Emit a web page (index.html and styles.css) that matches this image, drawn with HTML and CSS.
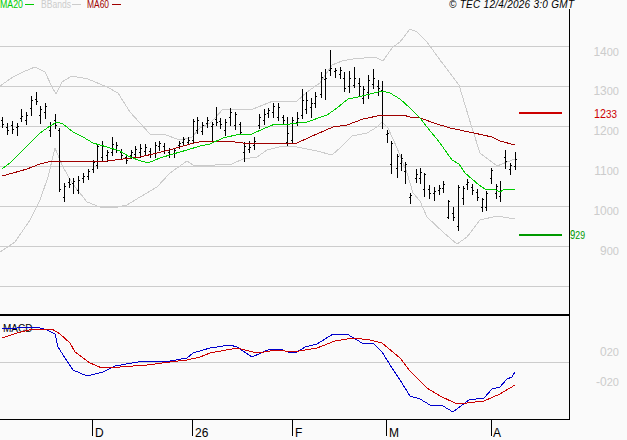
FILE: index.html
```html
<!DOCTYPE html>
<html lang="en">
<head>
    <meta charset="UTF-8">
    <title>Chart</title>
    <link rel="stylesheet" href="styles.css">
</head>
<body>
    <svg class="chart" width="627" height="440" viewBox="0 0 627 440">
        <!-- grid -->
        <path class="grid" d="M0 46.5H569M0 86.5H569M0 126.5H569M0 166.5H569M0 206.5H569M0 246.5H569M0 286.5H569M0 362.5H569"/>

        <!-- bollinger bands -->
        <polyline class="band" points="0,86 13,77 23,72 35,67 45,72 52,87 56,94 62,82 72,76 88,79 107,87 118,93 130,112 150,134 163,134 180,140 192,137 200,128 210,123 215,118 223,109 253,109 273,101 297,101 307,92 320,83 332,65 342,61 353,59 375,57 383,61 392,48 400,42 410,29 417,32 427,42 440,60 459,85 472,128 480,153 497,166 507,162 515,159"/>
        <polyline class="band" points="0,252 15,242 30,220 40,200 48,177 55,148 62,165 72,183 87,202 100,207 113,208 127,205 140,197 157,187 170,173 187,161 193,165 210,166 220,164 232,164 243,159 257,157 267,150 283,146 297,147 317,151 332,155 340,148 352,136 367,133 377,127 382,122 388,128 397,148 407,173 413,193 420,201 427,217 444,233 457,244 467,237 480,220 497,216 515,219"/>

        <!-- price bars -->
        <path class="bars" d="M2.5 117V128M1 120.5h1M3 124.5h1M7.5 123V135M6 127.5h1M8 130.5h1M12.5 121V134M11 125.5h1M13 129.5h1M17.5 123V136M16 127.5h1M18 126.5h1M21.5 109V122M20 118.5h1M22 116.5h1M26.5 112V125M25 120.5h1M27 115.5h1M31.5 96V116M30 108.5h1M32 100.5h1M36.5 92V105M35 99.5h1M37 101.5h1M40.5 106V124M39 115.5h1M41 109.5h1M45.5 103V119M44 112.5h1M46 106.5h1M50.5 122V137M49 130.5h1M51 125.5h1M55.5 114V129M54 120.5h1M56 125.5h1M59.5 128V192M58 130.5h1M60 189.5h1M64.5 183V202M63 197.5h1M65 186.5h1M69.5 178V188M68 182.5h1M70 184.5h1M73.5 178V194M72 183.5h1M74 181.5h1M78.5 176V194M77 190.5h1M79 180.5h1M83.5 173V183M82 178.5h1M84 176.5h1M88.5 169V180M87 176.5h1M89 171.5h1M93.5 160V173M92 169.5h1M94 162.5h1M97.5 144V169M96 165.5h1M98 146.5h1M102.5 141V162M101 157.5h1M103 146.5h1M107.5 150V162M106 155.5h1M108 152.5h1M112.5 137V156M111 152.5h1M113 144.5h1M116.5 142V153M115 149.5h1M117 145.5h1M121.5 149V160M120 152.5h1M122 155.5h1M126.5 155V164M125 157.5h1M127 160.5h1M131.5 150V159M130 155.5h1M132 152.5h1M135.5 146V158M134 154.5h1M136 149.5h1M140.5 144V158M139 152.5h1M141 148.5h1M145.5 144V156M144 151.5h1M146 147.5h1M150.5 148V158M149 151.5h1M151 154.5h1M155.5 142V158M154 153.5h1M156 145.5h1M159.5 141V151M158 146.5h1M160 143.5h1M164.5 143V154M163 146.5h1M165 150.5h1M169.5 148V158M168 152.5h1M170 154.5h1M174.5 148V158M173 153.5h1M175 150.5h1M179.5 141V149M178 145.5h1M180 143.5h1M183.5 137V146M182 142.5h1M184 139.5h1M188.5 137V145M187 142.5h1M189 140.5h1M193.5 119V143M192 140.5h1M194 121.5h1M197.5 117V134M196 130.5h1M198 120.5h1M202.5 122V135M201 131.5h1M203 125.5h1M207.5 117V128M206 123.5h1M208 120.5h1M212.5 122V141M211 126.5h1M213 124.5h1M216.5 107V126M215 119.5h1M217 122.5h1M220.5 118V129M219 121.5h1M221 124.5h1M225.5 119V136M224 130.5h1M226 122.5h1M230.5 108V126M229 117.5h1M231 112.5h1M235.5 112V130M234 125.5h1M236 114.5h1M240.5 122V135M239 124.5h1M241 132.5h1M244.5 142V162M243 152.5h1M245 146.5h1M249.5 141V153M248 149.5h1M250 147.5h1M254.5 137V150M253 145.5h1M255 141.5h1M259.5 114V129M258 125.5h1M260 117.5h1M264.5 109V125M263 120.5h1M265 114.5h1M268.5 108V118M267 113.5h1M269 110.5h1M273.5 103V118M272 112.5h1M274 106.5h1M278.5 103V121M277 117.5h1M279 107.5h1M283.5 115V125M282 117.5h1M284 120.5h1M287.5 117V146M286 142.5h1M288 133.5h1M292.5 117V143M291 140.5h1M293 120.5h1M297.5 112V126M296 122.5h1M298 118.5h1M302.5 89V119M301 115.5h1M303 100.5h1M306.5 92V114M305 109.5h1M307 100.5h1M311.5 98V118M310 107.5h1M312 103.5h1M315.5 92V108M314 103.5h1M316 96.5h1M321.5 72V98M320 94.5h1M322 77.5h1M325.5 69V100M324 79.5h1M326 78.5h1M330.5 50V76M329 70.5h1M331 68.5h1M335.5 68V78M334 71.5h1M336 70.5h1M340.5 67V79M339 74.5h1M341 70.5h1M344.5 72V92M343 78.5h1M345 88.5h1M349.5 71V93M348 86.5h1M350 78.5h1M354.5 67V88M353 85.5h1M355 78.5h1M359.5 78V96M358 83.5h1M360 86.5h1M363.5 86V104M362 98.5h1M364 89.5h1M368.5 75V99M367 92.5h1M369 80.5h1M373.5 69V89M372 84.5h1M374 78.5h1M378.5 80V96M377 86.5h1M379 88.5h1M382.5 81V129M381 90.5h1M383 91.5h1M387.5 130V143M386 134.5h1M388 133.5h1M391.5 141V174M390 164.5h1M392 143.5h1M397.5 154V178M396 168.5h1M398 156.5h1M401.5 154V171M400 163.5h1M402 158.5h1M405.5 162V184M404 171.5h1M406 164.5h1M410.5 193V204M409 197.5h1M411 195.5h1M416.5 169V183M415 178.5h1M417 174.5h1M420.5 168V184M419 178.5h1M421 172.5h1M424.5 173V197M423 189.5h1M425 174.5h1M429.5 185V199M428 189.5h1M430 193.5h1M434.5 187V201M433 193.5h1M435 191.5h1M439.5 185V195M438 190.5h1M440 188.5h1M443.5 181V193M442 188.5h1M444 184.5h1M448.5 200V219M447 217.5h1M449 201.5h1M453.5 207V221M452 213.5h1M454 217.5h1M458.5 185V231M457 226.5h1M459 187.5h1M463.5 186V205M462 198.5h1M464 188.5h1M467.5 179V190M466 184.5h1M468 182.5h1M472.5 184V195M471 187.5h1M473 190.5h1M477.5 189V201M476 192.5h1M478 197.5h1M482.5 198V212M481 207.5h1M483 199.5h1M486.5 191V211M485 207.5h1M487 193.5h1M491.5 168V184M490 178.5h1M492 170.5h1M496.5 184V199M495 193.5h1M497 186.5h1M500.5 181V202M499 196.5h1M501 191.5h1M505.5 150V169M504 157.5h1M506 161.5h1M510.5 163V175M509 169.5h1M511 165.5h1M515.5 152V170M514 166.5h1M516 159.5h1"/>

        <!-- moving averages -->
        <polyline class="ma60" points="2,176 13,173 27,169 40,164 52,161 73,161 87,161 107,161 123,159 140,157 157,153 173,149 190,144 203,141 210,141 227,141 243,143 267,143 297,143 310,137 333,127 347,125 363,119 382,115 403,115 410,117 420,118 434,123 450,128 474,133 492,137 500,141 515,145"/>
        <polyline class="ma20" points="2,169 10,163 20,153 30,143 40,133 50,126 57,122 63,124 73,132 83,137 93,143 107,147 120,151 128,156 138,160 148,163 160,158 173,154 187,150 200,146 210,144 223,138 240,134 252,134 263,129 275,124 290,124 307,122 327,115 337,108 348,99 358,97 370,94 382,91 390,93 400,99 410,108 420,118 427,127 440,143 452,160 459,164 465,173 479,185 485,189 494,189 500,192 505,189 515,189"/>

        <!-- target levels -->
        <path class="level-up" d="M519 113H562"/>
        <path class="level-down" d="M519 235H562"/>

        <!-- macd -->
        <text class="macd-label" x="3" y="332">MACD</text>
        <polyline class="macd-line" points="2,328 17,328 23,327 37,327 47,330 55,334 58,347 65,358 73,370 87,376 103,372 115,366 138,362 170,361 187,358 193,353 210,348 230,345 237,347 252,357 270,349 280,349 288,352 297,352 305,347 317,344 333,334 347,334 362,343 373,343 382,352 392,368 400,380 410,396 420,399 430,405 443,406 453,412 469,400 484,398 492,389 500,387 507,379 512,377 515,372"/>
        <polyline class="macd-signal" points="2,338 17,333 33,329 52,329 60,334 70,343 75,352 90,363 102,368 120,367 147,365 170,362 187,360 200,357 210,353 237,348 257,353 277,350 293,352 317,348 335,341 353,338 370,340 382,343 400,358 410,371 420,381 427,388 440,396 455,403 467,403 484,401 500,394 515,385"/>

        <!-- frame and month ticks -->
        <path class="frame" d="M569.5 9V420M0 419.5H570M92.5 419V436M192.5 419V436M292.5 419V436M386.5 419V436M491.5 419V436"/>
        <path class="divider" d="M0 315H570"/>

        <!-- legend -->
        <text class="legend legend-green" x="0" y="8" textLength="23" lengthAdjust="spacingAndGlyphs">MA20</text>
        <path class="ma20" d="M25 4.5H34"/>
        <text class="legend legend-grey" x="41" y="8" textLength="30" lengthAdjust="spacingAndGlyphs">BBands</text>
        <path class="band" d="M72 4.5H81"/>
        <text class="legend legend-red" x="87" y="8" textLength="22" lengthAdjust="spacingAndGlyphs">MA60</text>
        <path class="ma60" d="M112 4.5H121"/>
        <text class="stamp" x="449" y="8" textLength="125">© TEC 12/4/2026 3:0 GMT</text>

        <!-- price axis -->
        <text class="axis" x="619" y="56" text-anchor="end">14<tspan class="small">00</tspan></text>
        <text class="axis" x="619" y="95" text-anchor="end">13<tspan class="small">00</tspan></text>
        <text class="axis" x="619" y="135" text-anchor="end">12<tspan class="small">00</tspan></text>
        <text class="axis" x="619" y="175" text-anchor="end">11<tspan class="small">00</tspan></text>
        <text class="axis" x="619" y="215" text-anchor="end">10<tspan class="small">00</tspan></text>
        <text class="axis" x="619" y="255" text-anchor="end">9<tspan class="small">00</tspan></text>
        <text class="axis axis-red" x="594" y="118" textLength="23" lengthAdjust="spacingAndGlyphs">12<tspan class="small">33</tspan></text>
        <text class="axis axis-green" x="570" y="239" textLength="15" lengthAdjust="spacingAndGlyphs">9<tspan class="small">29</tspan></text>
        <text class="axis" x="619" y="356" text-anchor="end">0<tspan class="small">20</tspan></text>
        <text class="axis" x="619" y="386" text-anchor="end">-0<tspan class="small">20</tspan></text>

        <!-- month labels -->
        <text class="month" x="95" y="437">D</text>
        <text class="month" x="195" y="437">26</text>
        <text class="month" x="295" y="437">F</text>
        <text class="month" x="389" y="437">M</text>
        <text class="month" x="493" y="437">A</text>
    </svg>
</body>
</html>
```
FILE: styles.css
```css
body {
    margin: 0;
    background-color: #fafafa;
    overflow: hidden;
}

.chart {
    display: block;
    font-family: "Liberation Sans", Arial, sans-serif;
}

.chart path,
.chart polyline {
    fill: none;
    stroke-width: 1;
    shape-rendering: crispEdges;
}

.grid {
    stroke: #cccccc;
}

.band {
    stroke: #cccccc;
}

.bars {
    stroke: #000000;
}

.ma20 {
    stroke: #00cc00;
}

.ma60 {
    stroke: #a00000;
}

.chart .level-up {
    stroke: #cc0000;
    stroke-width: 2;
}

.chart .level-down {
    stroke: #009900;
    stroke-width: 2;
}

.macd-line {
    stroke: #0000cc;
}

.macd-signal {
    stroke: #cc0000;
}

.frame {
    stroke: #000000;
}

.chart .divider {
    stroke: #000000;
    stroke-width: 2;
}

.legend {
    font-size: 10px;
}

.legend-green {
    fill: #00cc00;
}

.legend-grey {
    fill: #cccccc;
}

.legend-red {
    fill: #a00000;
}

.stamp {
    font-size: 10px;
    font-style: italic;
    fill: #000000;
}

.macd-label {
    font-size: 10px;
    fill: #000000;
}

.axis {
    font-size: 12px;
    fill: #cccccc;
}

.axis .small {
    font-size: 11px;
}

.axis-red {
    fill: #cc0000;
}

.axis-green {
    fill: #009900;
}

.month {
    font-size: 12px;
    fill: #000000;
}
```
